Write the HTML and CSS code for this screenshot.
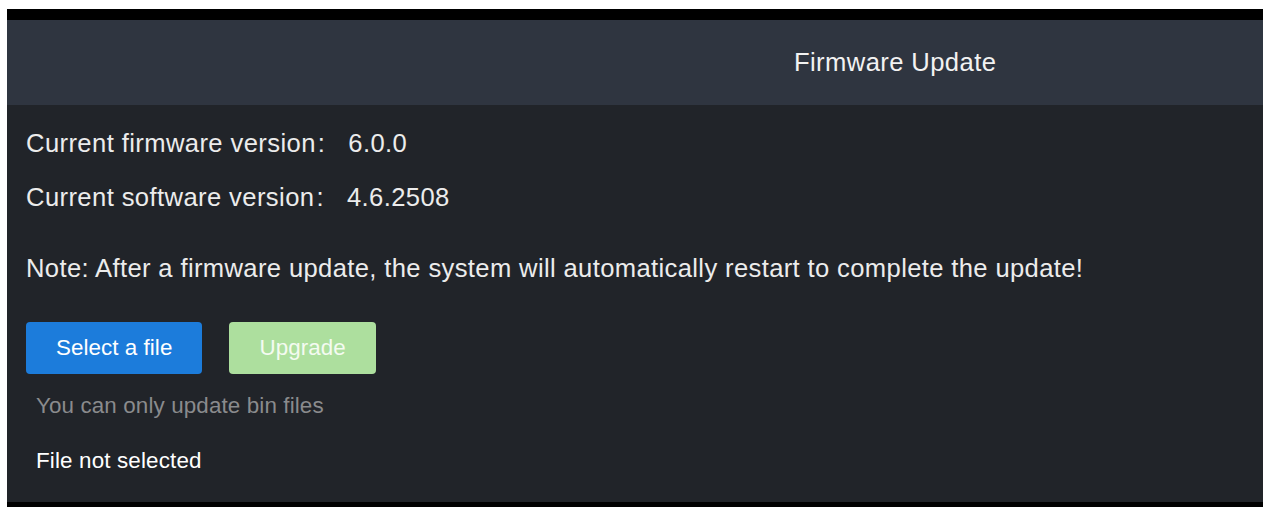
FILE: index.html
```html
<!DOCTYPE html>
<html lang="en">
<head>
<meta charset="utf-8">
<title>Firmware Update</title>
<link rel="stylesheet" href="styles.css">
</head>
<body>
<div class="frame">
  <div class="header">
    <span class="title">Firmware Update</span>
  </div>
  <div class="panel">
    <div class="row row-first">
      <span class="label">Current firmware version</span><span class="colon">:</span><span class="value">6.0.0</span>
    </div>
    <div class="row">
      <span class="label">Current software version</span><span class="colon">:</span><span class="value">4.6.2508</span>
    </div>
    <div class="row note">Note: After a firmware update, the system will automatically restart to complete the update!</div>
    <div class="buttons">
      <button class="btn btn-primary">Select a file</button>
      <button class="btn btn-success" disabled>Upgrade</button>
    </div>
    <div class="hint">You can only update bin files</div>
    <div class="file">File not selected</div>
  </div>
</div>
</body>
</html>
```

FILE: styles.css
```css
html, body {
  margin: 0;
  padding: 0;
  background: #ffffff;
}

body {
  font-family: "Liberation Sans", Arial, sans-serif;
}

.frame {
  margin: 9px 0 0 7px;
  width: 1256px;
  background: #000000;
  padding: 11px 0 5px 0;
}

.header {
  height: 85px;
  background: #2f3540;
  display: flex;
  align-items: center;
  padding-left: 787px;
  box-sizing: border-box;
}

.title {
  font-size: 25.6px;
  letter-spacing: 0.4px;
  color: #f2f2f2;
  line-height: 29px;
}

.panel {
  background: #212429;
  height: 397px;
  box-sizing: border-box;
  padding: 24px 0 0 19px;
  color: #ececec;
}

.row {
  font-size: 25.6px;
  letter-spacing: 0.4px;
  line-height: 29px;
  margin-bottom: 25px;
  white-space: nowrap;
}

.colon {
  margin-left: 2px;
}

.value {
  margin-left: 23px;
}

.note {
  margin-top: 42px;
  margin-bottom: 39px;
  letter-spacing: 0.36px;
}

.buttons {
  display: flex;
  gap: 27px;
}

.btn {
  height: 52px;
  padding: 0 30px;
  border: none;
  border-radius: 4px;
  font-family: "Liberation Sans", Arial, sans-serif;
  font-size: 22.4px;
  letter-spacing: 0.05px;
  color: #ffffff;
  display: flex;
  align-items: center;
  justify-content: center;
}

.btn-primary {
  background: #1c7cdb;
}

.btn-success {
  background: #addf9e;
  color: #f4fbf1;
}

.hint {
  margin-top: 19px;
  margin-left: 10px;
  font-size: 22.4px;
  letter-spacing: 0.12px;
  line-height: 26px;
  color: #8a8b8d;
}

.file {
  margin-top: 29px;
  margin-left: 10px;
  font-size: 22.4px;
  letter-spacing: 0.15px;
  line-height: 26px;
  color: #ffffff;
}
```
